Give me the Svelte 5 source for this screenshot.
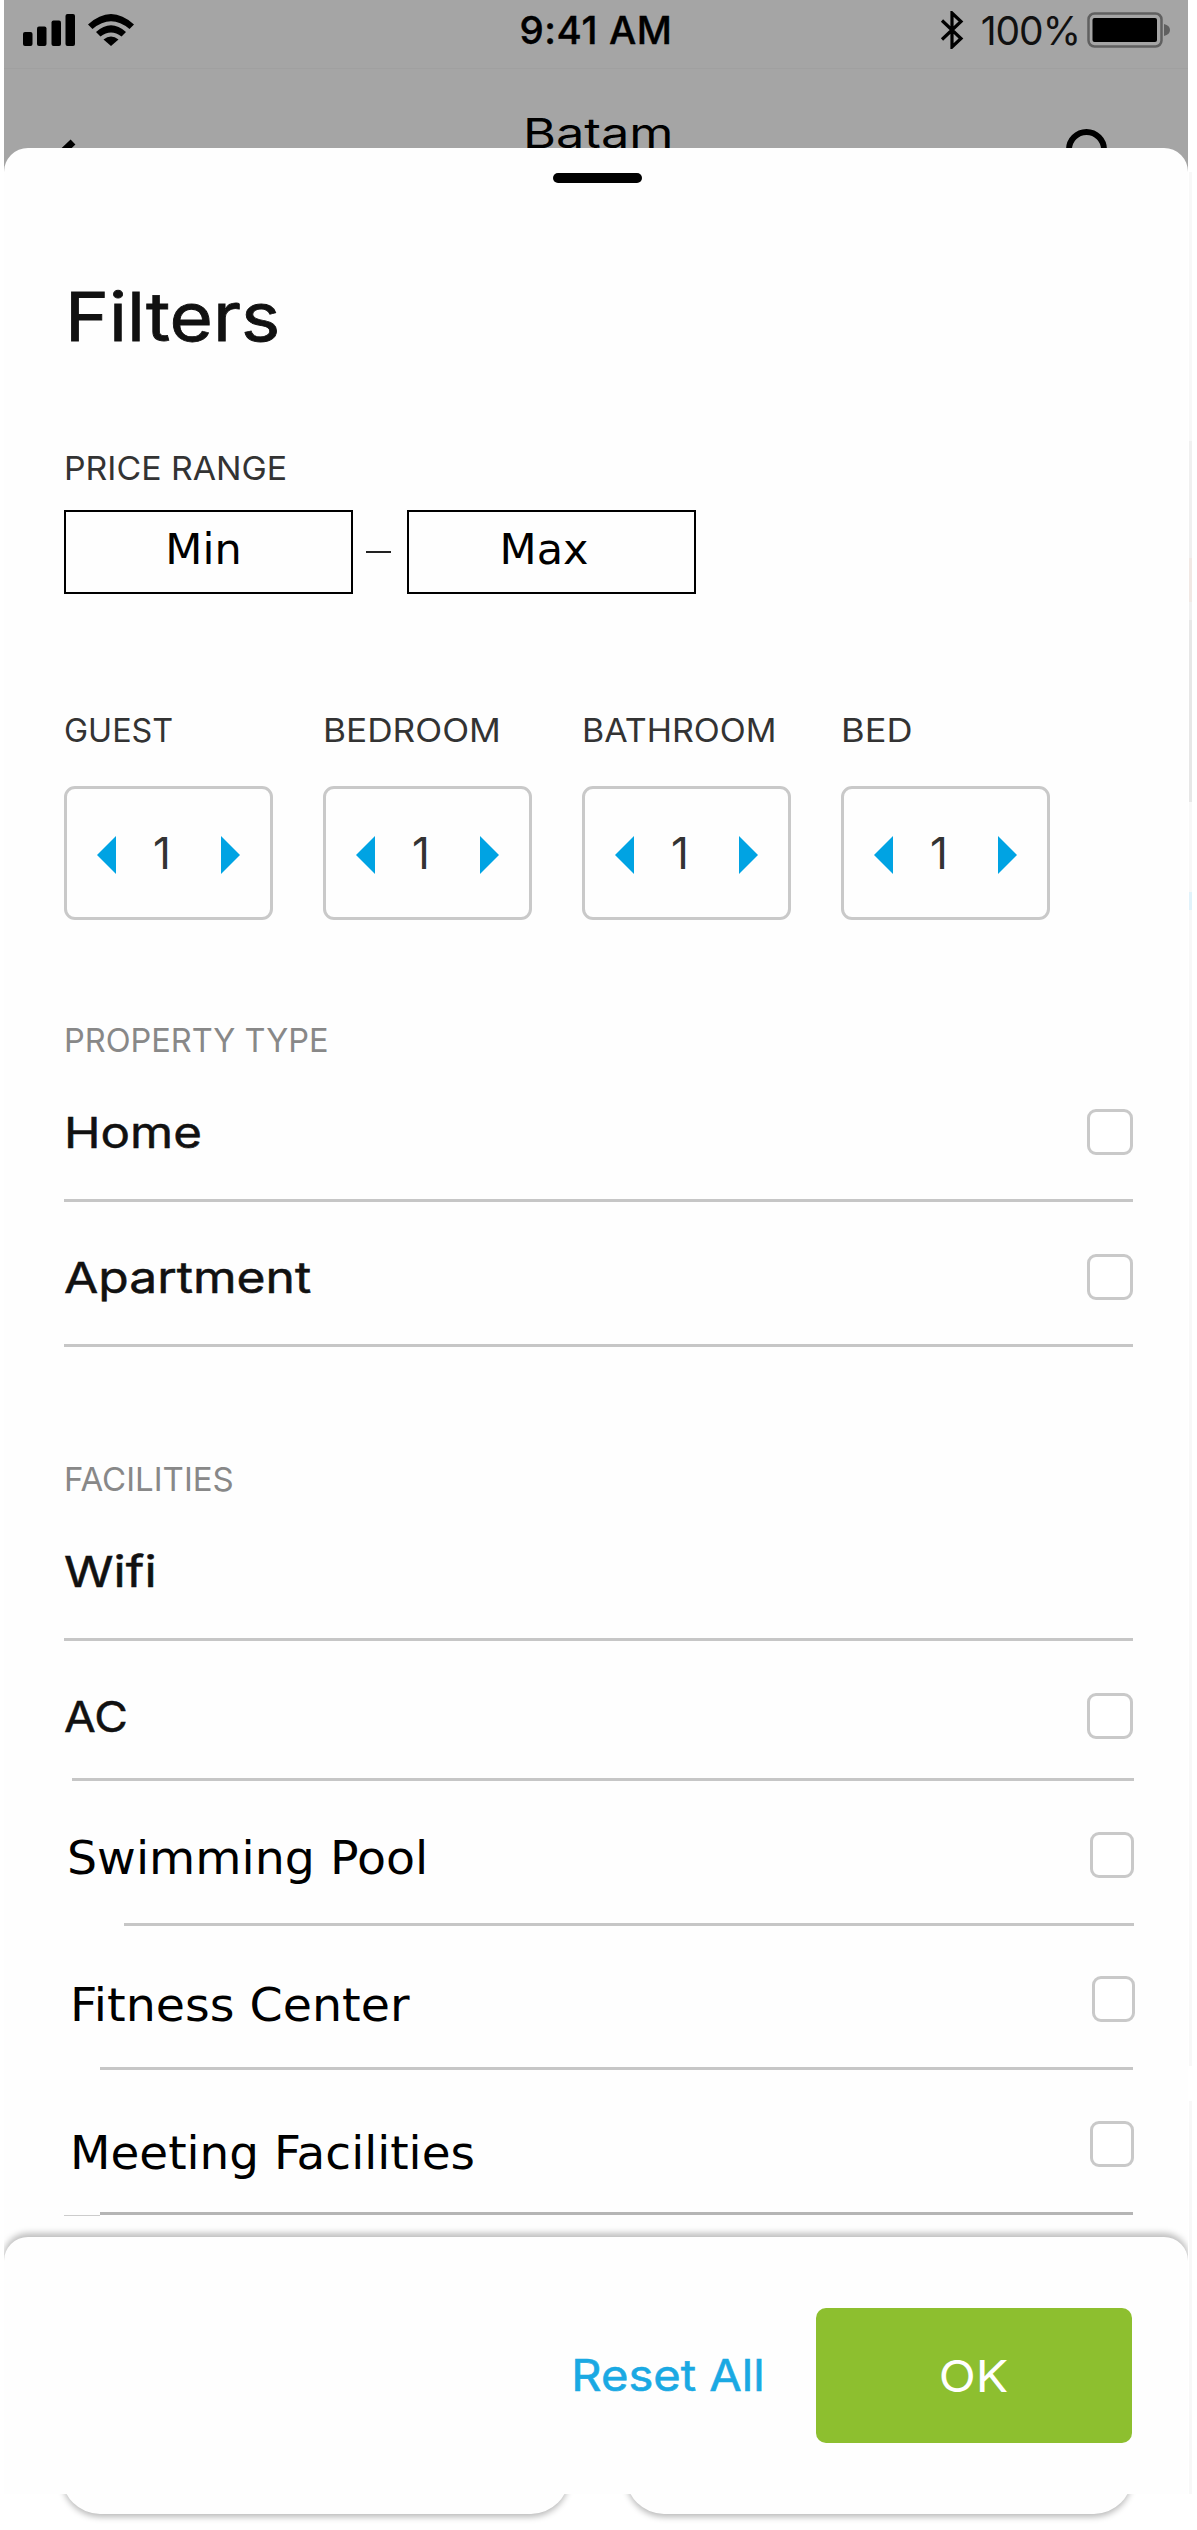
<script>
  // `stretch` widens a label horizontally, from its left edge
  const counters = $state([
    { label: 'GUEST', value: 1, stretch: 1.01 },
    { label: 'BEDROOM', value: 1, stretch: 1.1 },
    { label: 'BATHROOM', value: 1, stretch: 1.062 },
    { label: 'BED', value: 1, stretch: 1.13 }
  ]);

  const propertyTypes = [
    { name: 'Home', kind: 'tall', box: true, stretch: 1.145 },
    { name: 'Apartment', kind: 'tall', box: true, stretch: 1.157 }
  ];

  const facilities = [
    { name: 'Wifi', kind: 'tall', box: false, stretch: 1.17 },
    { name: 'AC', kind: 'short', box: true, stretch: 1.07 },
    { name: 'Swimming Pool', kind: 'pool', box: true, stretch: 1.014 },
    { name: 'Fitness Center', kind: 'fitness', box: true, stretch: 1.015 },
    { name: 'Meeting Facilities', kind: 'meeting', box: true, stretch: 1.002 }
  ];

  const step = (c, by) => (c.value = Math.max(1, c.value + by));
</script>

{#snippet row(item)}
  <label class="row {item.kind}">
    <span class="line">
      <span class="name" style:--stretch={item.stretch}>{item.name}</span>
      {#if item.box}<input type="checkbox" />{/if}
    </span>
    <span class="rule"></span>
  </label>
{/snippet}

<div class="screen">
  <header>
    <div class="status">
      <div class="signal">
        <svg width="52" height="32" viewBox="0 0 52 32">
          <rect x="0" y="18" width="9.5" height="14" rx="2" />
          <rect x="14" y="12.5" width="9.5" height="19.5" rx="2" />
          <rect x="28.5" y="6.5" width="9.5" height="25.5" rx="2" />
          <rect x="42.5" y="0" width="9.5" height="32" rx="2" />
        </svg>
        <svg width="46" height="32" viewBox="0 0 46 32">
          <path d="M0 10.5 Q23 -10.5 46 10.5 L41.5 15 Q23 -0.5 4.5 15 Z" />
          <path d="M8 18 Q23 4.5 38 18 L33.5 22.5 Q23 14.5 12.5 22.5 Z" />
          <path d="M15.5 25.5 Q23 19.5 30.5 25.5 L23 32 Z" />
        </svg>
      </div>
      <span class="time">9:41 AM</span>
      <div class="power">
        <svg width="24" height="38" viewBox="0 0 24 38">
          <path d="M2 9.5 L21 27.5 L12 36 V2 L21 10.5 L2 28.5" fill="none" stroke="#000" stroke-width="3.2" />
        </svg>
        <span class="percent">100%</span>
        <svg width="84" height="36" viewBox="0 0 84 36">
          <rect x="1.5" y="1.5" width="73" height="33" rx="6" fill="none" stroke="#606060" stroke-width="2.5" />
          <rect x="5.5" y="6" width="64.5" height="24" rx="2" />
          <path d="M77 12 Q83 13.5 83 18 Q83 22.5 77 24 Z" fill="#606060" />
        </svg>
      </div>
    </div>
    <nav>
      <svg class="back" width="40" height="48" viewBox="0 0 40 48">
        <path d="M28 3 L6 24 L28 45" fill="none" stroke="#000" stroke-width="7" />
      </svg>
      <span class="title">Batam</span>
      <svg class="search" width="54" height="54" viewBox="0 0 54 54">
        <circle cx="20.5" cy="20.5" r="17.5" fill="none" stroke="#000" stroke-width="6" />
        <path d="M33 33 L50 50" stroke="#000" stroke-width="6" />
      </svg>
    </nav>
  </header>

  <main>
    <div class="handle"></div>
    <h1>Filters</h1>

    <h2 class="dark price">PRICE RANGE</h2>
    <div class="range">
      <div class="field min">Min</div>
      <span class="dash"></span>
      <div class="field max">Max</div>
    </div>

    <div class="counters">
      {#each counters as c}
        <div class="counter">
          <h3 style:--stretch={c.stretch}>{c.label}</h3>
          <div class="stepper">
            <button aria-label="Fewer" onclick={() => step(c, -1)}>
              <svg width="19" height="38" viewBox="0 0 19 38"><path d="M19 0 V38 L0 19 Z" /></svg>
            </button>
            <span class="value">{c.value}</span>
            <button aria-label="More" onclick={() => step(c, 1)}>
              <svg width="19" height="38" viewBox="0 0 19 38"><path d="M0 0 V38 L19 19 Z" /></svg>
            </button>
          </div>
        </div>
      {/each}
    </div>

    <h2 class="property">PROPERTY TYPE</h2>
    {#each propertyTypes as item}{@render row(item)}{/each}

    <h2 class="facilities">FACILITIES</h2>
    {#each facilities as item}{@render row(item)}{/each}
    <div class="hairline"></div>
  </main>

  <div class="actions-clip">
    <div class="actions">
      <button class="reset"><span>Reset All</span></button>
      <button class="ok"><span>OK</span></button>
    </div>
  </div>

  <div class="cards">
    <div class="card"></div>
    <div class="card"></div>
  </div>
  <div class="edge"></div>
</div>

<style>
  :global(body) { margin: 0; background: #fff; }
  .screen {
    position: relative;
    width: 1184px;
    height: 2530px;
    margin-left: 4px;
    font-family: Inter, 'Liberation Sans', sans-serif;
    color: #111;
  }
  svg { display: block; flex: none; }
  button { border: 0; background: none; padding: 0; font: inherit; }

  header { height: 172px; background: #a5a5a5; color: #000; overflow: hidden; }
  .status {
    box-sizing: border-box;
    height: 69px;
    padding: 0 17px 8px 19px;
    border-bottom: 1px solid #a0a0a0;
    display: grid;
    grid-template-columns: 1fr auto 1fr;
    align-items: center;
  }
  .signal { display: flex; gap: 13px; }
  .time { font-size: 38.5px; font-weight: 500; letter-spacing: 0.6px; margin-right: 2px; -webkit-text-stroke: 0.4px #000; }
  .power { display: flex; justify-content: flex-end; align-items: center; }
  .percent { font-size: 39px; margin: 0 7px 0 17px; letter-spacing: -1px; color: #111; }
  nav {
    display: grid;
    grid-template-columns: 1fr auto 1fr;
    align-items: start;
    padding: 60px 68px 0 41px;
  }
  .back { margin-top: 10px; }
  .search { justify-self: end; }
  .title { font-size: 41px; line-height: 50px; margin: -21px 0 0 32px; transform: scaleX(1.23); }

  main {
    position: relative;
    box-sizing: border-box;
    height: 2090px;
    margin-top: -24px;
    padding: 25px 55px 0 60px;
    background: #fefefe;
    border-radius: 24px 24px 0 0;
  }
  .handle { width: 89px; height: 10px; border-radius: 5px; background: #000; margin: 0 auto 0 489px; }
  h1, h2, h3 { width: max-content; margin: 0; font-weight: 400; transform-origin: left; white-space: nowrap; }
  h1 { font-size: 67px; -webkit-text-stroke: 0.8px #111; line-height: 80px; margin: 94px 0 0 1px; transform: scaleX(1.11); }
  h2 { font-size: 33px; line-height: 40px; color: #888; }
  h2.dark { color: #333; }
  .price { margin-top: 91px; transform: scaleX(1.025); }
  .property { margin-top: 100px; transform: scaleX(0.985); }
  .facilities { margin-top: 112px; }

  .range { display: flex; align-items: center; margin-top: 22px; height: 84px; }
  .field {
    box-sizing: border-box;
    width: 289px;
    height: 84px;
    border: 2.5px solid #000;
    font: 43px/75px 'DejaVu Sans', sans-serif;
    color: #000;
    text-align: center;
  }
  .min { padding-right: 10px; }
  .max { padding-right: 15px; }
  .dash { width: 25px; height: 2px; background: #222; margin: 0 16px 0 13px; }

  .counters { display: grid; grid-template-columns: repeat(4, 209px); column-gap: 50px; margin-top: 117px; }
  h3 { font-size: 32px; line-height: 40px; color: #333; transform: scaleX(var(--stretch)); }
  .stepper {
    box-sizing: border-box;
    height: 134px;
    margin-top: 35px;
    border: 3px solid #c9c9c9;
    border-radius: 11px;
    display: flex;
    align-items: center;
    justify-content: space-between;
    padding: 3px 30px 0 30px;
  }
  .stepper svg { fill: #00a3e3; }
  .value { font-size: 44px; line-height: 50px; margin: -4px 0 0 -13px; color: #333; }

  .row { display: block; }
  .line { display: flex; align-items: center; justify-content: space-between; box-sizing: border-box; }
  .name { font-size: 43px; -webkit-text-stroke: 0.5px #111; line-height: 56px; transform: scaleX(var(--stretch)); transform-origin: left; white-space: nowrap; }
  .rule { display: block; height: 3px; background: #c6c6c6; }
  input {
    appearance: none;
    box-sizing: border-box;
    width: 46px;
    height: 46px;
    margin: 0;
    border: 3px solid #c9c9c9;
    border-radius: 9px;
    background: #fff;
  }
  .tall .line { height: 142px; padding-top: 8px; }
  .facilities + .tall, .property + .tall { margin-top: -3px; }
  .short .line { height: 137px; padding-top: 13px; }
  .short .rule { margin-left: 8px; margin-right: -1px; }
  .pool .line, .fitness .line, .meeting .line { height: 142px; padding-top: 5px; }
  .fitness .line { height: 141px; }
  .pool .name, .fitness .name, .meeting .name {
    font-family: 'DejaVu Sans', sans-serif;
    font-size: 46.8px;
    -webkit-text-stroke: 0;
    color: #000;
  }
  .pool .name { margin: 7px 0 0 3px; }
  .fitness .name { margin: 11px 0 0 6px; }
  .meeting .name { margin: 19px 0 0 6px; }
  .pool input, .fitness input, .meeting input { width: 44px; margin-right: -1px; }
  .fitness input { width: 43px; margin-right: -2px; }
  .pool .rule { margin-left: 60px; margin-right: -1px; }
  .fitness .rule { margin-left: 36px; }
  .meeting .rule { margin-left: 36px; background: #b5b5b5; }
  .hairline { width: 36px; height: 1px; background: #ccc; }

  .actions-clip { position: relative; overflow: hidden; height: 268px; margin-top: -12px; }
  .actions {
    box-sizing: border-box;
    height: 270px;
    margin-top: 11px;
    padding: 71px 56px 0 0;
    border-radius: 24px 24px 0 0;
    background: #fefefe;
    box-shadow: 0 -3px 6px 1px rgba(0, 0, 0, 0.25);
    display: flex;
    justify-content: flex-end;
    align-items: flex-start;
  }
  .reset { color: #1aa9e3; font-size: 44px; line-height: 135px; margin-right: 51px; -webkit-text-stroke: 0.6px #1aa9e3; }
  .reset span { display: inline-block; transform: scaleX(1.07); transform-origin: right; }
  .ok { width: 316px; height: 135px; border-radius: 10px; background: #8dbf2f; color: #fff; font-size: 44px; }
  .ok span { display: inline-block; transform: scaleX(1.1); }

  .cards { height: 36px; overflow: hidden; display: flex; gap: 57px; padding: 0 56px 0 58px; }
  .card {
    flex: 1;
    height: 120px;
    margin-top: -100px;
    border-radius: 38px;
    background: #fefefe;
    box-shadow: 0 3px 6px rgba(0, 0, 0, 0.28);
  }

  /* Neighbouring page showing along the right border */
  .edge {
    position: absolute;
    left: 1185px;
    top: 172px;
    width: 3px;
    height: 2322px;
    background: linear-gradient(
      #f8f8f8 269px, #f0f0f0 269px 386px, #f1e8e4 386px 430px, #f0f0f0 430px 448px,
      #e7e7e7 448px 630px, #f8f8f8 630px 720px, #e1f2fa 720px 738px, #f8f8f8 738px 1894px,
      #fff 1894px 1929px, #f8f8f8 1929px
    );
  }
</style>
